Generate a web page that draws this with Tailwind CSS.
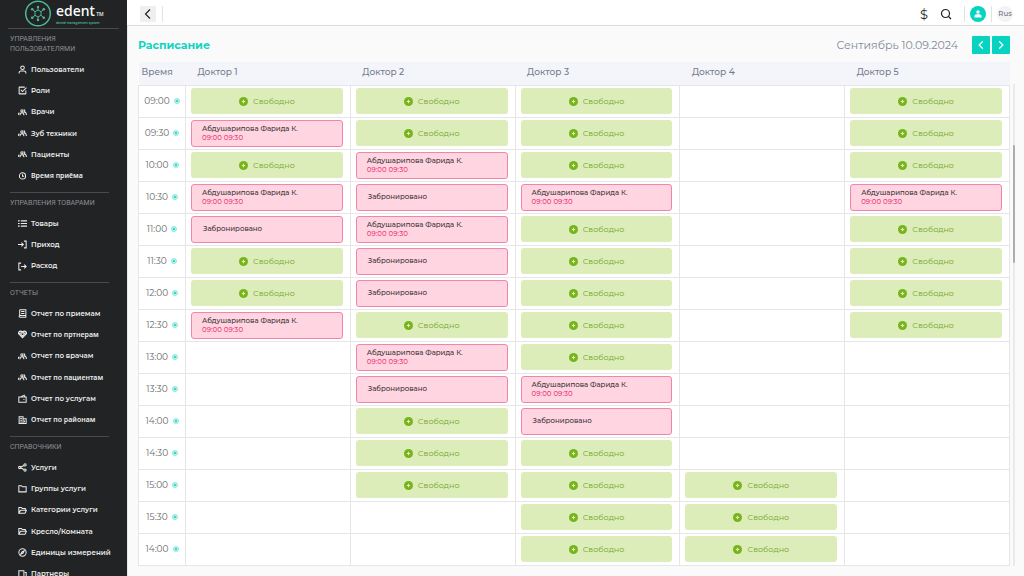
<!DOCTYPE html>
<html lang="ru">
  <head>
    <meta charset="UTF-8" />
    <meta name="viewport" content="width=device-width, initial-scale=1.0" />
    <title>edent - Расписание</title>
    <script src="https://cdn.jsdelivr.net/npm/@tailwindcss/browser@4"></script>
  </head>
  <body class="flex h-screen overflow-hidden bg-[#fafafa] font-['Montserrat','Inter',sans-serif]">
    <!-- Icons -->
    <svg class="hidden">
      <symbol id="user" viewBox="0 0 16 16"><circle cx="8" cy="5" r="3.2" /><path d="M2 15v-1.500c0-2 1.500-3 3.500-3h5c2 0 3.500 1 3.500 3V15" /></symbol>
      <symbol id="check" viewBox="0 0 16 16"><path d="M14 8v5.200a.8.8 0 0 1-.8.8H2.800a.8.8 0 0 1-.8-.8V2.800a.8.8 0 0 1 .8-.8H12M5 7l3 3 7-7" /></symbol>
      <symbol id="team" viewBox="0 0 16 16"><circle cx="7" cy="5" r="2" /><path d="M3.500 13c0-3 1-4.500 3.500-4.500s3.500 1.500 3.500 4.500M10 3.200a2 2 0 0 1 1 3.800c2.500.3 4 2.200 4 5.500M.5 12.500c0-2 .6-3.500 2-4" /></symbol>
      <symbol id="clock" viewBox="0 0 16 16"><circle cx="8" cy="7" r="5.500" /><path d="M8 4v3.500h3" /></symbol>
      <symbol id="list" viewBox="0 0 16 16"><path d="M0 3.500h3M0 8h3M0 12.500h3M5 3.500h11M5 8h11M5 12.500h11" stroke-width="2.200" /></symbol>
      <symbol id="login" viewBox="0 0 16 16"><path d="M0 8h9M6 4.500L9.500 8 6 11.500M10.500 2H14.500v12H10.500" /></symbol>
      <symbol id="logout" viewBox="0 0 16 16"><path d="M5.500 2H1.500v12h4M5.500 8h9M11 4.500L14.500 8 11 11.500" /></symbol>
      <symbol id="report" viewBox="0 0 16 16"><path d="M3 1.500h11v13H3.500a1.500 1.500 0 0 1 0-3H14M3 1.500v11M5.500 4.500h6M5.500 8h6" /></symbol>
      <symbol id="partner" viewBox="0 0 16 16"><path d="M4.500 2C6 2 7 2.500 8 3.500 9 2.500 10 2 11.500 2 14 2 15.500 4 15 6.500L8 14 1 6.500C.5 4 2 2 4.500 2zM2 6.500l3-.5 3-2.500 3 2.500 3 .5M5 7l3 4 3-4" fill="currentColor" fill-opacity=".4" /></symbol>
      <symbol id="bag" viewBox="0 0 16 16"><path d="M1.500 5.500h13v9h-13zM4 5.500l7-3.500 1.500 3.500M10.500 9v1.500" /></symbol>
      <symbol id="building" viewBox="0 0 16 16"><path d="M2 13.500v-12h7v12M9 5h5.500v8.500H1M4 4.500h3M4 7.500h3M4 10.500h3M11.500 8v3" /></symbol>
      <symbol id="share" viewBox="0 0 16 16"><circle cx="3" cy="8" r="2" /><circle cx="12.500" cy="3.500" r="2" /><circle cx="12.500" cy="12.500" r="2" /><path d="M5 7.200l5.500-2.700M5 8.800l5.500 2.700" /></symbol>
      <symbol id="folder" viewBox="0 0 16 16"><path d="M1.500 3h4.500l2 2h6.500v9h-13z" /></symbol>
      <symbol id="folder-open" viewBox="0 0 16 16"><path d="M1.500 13V2.500H6l1.500 2H13V7M1.500 13L4.500 7.500H15l-2.500 5.500z" /></symbol>
      <symbol id="compass" viewBox="0 0 16 16"><circle cx="8" cy="8" r="6.500" /><path d="M11 5L9 9l-4 2 2-4z" /></symbol>
      <symbol id="copy" viewBox="0 0 16 16"><path d="M1.500 1.500h9v10h-9zM12 4.500h2.500v10H6v-2" /></symbol>
      <symbol id="plus" viewBox="0 0 16 16"><circle cx="8" cy="8" r="8" fill="#76b41c" stroke="none" /><path d="M8 5v6M5 8h6" stroke="#dcedba" stroke-width="2" /></symbol>
    </svg>

    <!-- Sidebar -->
    <aside class="w-[127px] shrink-0 overflow-hidden bg-[#212325] text-[#ececec]">
      <a href="#" class="flex h-7 items-center gap-1 pl-6">
        <svg class="size-7 text-[#4db893]" viewBox="0 0 28 28" fill="none" stroke="currentColor">
          <circle cx="14" cy="13.500" r="12.300" stroke-width="1.500" />
          <path d="M14 10l3 1.700v3.600L14 17l-3-1.700v-3.600zM11 11.700L8.500 9.500M17 11.700l2.500-2.200M11 15.300l-2.500 2.200M17 15.300l2.500 2.200M14 10V7.500M14 17v2.500" />
          <g fill="currentColor" stroke="none">
            <circle cx="8.200" cy="9.200" r="1.300" /><circle cx="19.800" cy="9.200" r="1.300" /><circle cx="8.200" cy="17.800" r="1.300" /><circle cx="19.800" cy="17.800" r="1.300" />
            <circle cx="14" cy="7" r="1.200" /><circle cx="14" cy="20" r="1.200" />
          </g>
        </svg>
        <span class="flex flex-col font-['Noto_Sans',sans-serif]">
          <span class="text-[14px] leading-[14px] font-medium text-white">edent<span class="text-[5px]"> TM</span></span>
          <span class="font-['Montserrat','Inter',sans-serif] text-[3px] leading-[4px] font-semibold whitespace-nowrap text-[#4db893]">dental management system</span>
        </span>
      </a>
      <nav id="menu"></nav>
    </aside>

    <!-- Page -->
    <div class="flex min-w-0 flex-1 flex-col">
      <header class="flex h-[26px] shrink-0 items-center justify-between border-b border-[#dcdcdc] bg-white pt-0.5 pr-[11px] pl-[13px]">
        <div class="flex items-center">
          <button aria-label="Назад" class="flex size-4 items-center justify-center bg-[#efefef]">
            <svg class="size-3 fill-none stroke-[#222] stroke-[1.200]" viewBox="0 0 12 12"><path d="M8 1.500L3.500 6 8 10.500" /></svg>
          </button>
          <span class="ml-1.5 h-4 w-px bg-[#e2e2e2]"></span>
        </div>
        <div class="flex items-center">
          <button aria-label="Валюта" class="text-[13px] leading-4 text-[#222]">$</button>
          <button aria-label="Поиск" class="ml-3">
            <svg class="size-3 fill-none stroke-[#222] stroke-[1.200]" viewBox="0 0 12 12"><circle cx="5.500" cy="5.500" r="4" /><path d="M8.500 8.500L11 11" /></svg>
          </button>
          <span class="ml-3 h-4 w-px bg-[#e2e2e2]"></span>
          <button aria-label="Профиль" class="ml-[5px] flex size-4 items-center justify-center rounded-full bg-[#06d3c0]">
            <svg class="size-2 fill-white" viewBox="0 0 8 8"><circle cx="4" cy="2" r="1.700" /><path d="M.5 7.500V6.300C.5 5 1.500 4.300 2.700 4.300h2.600c1.200 0 2.200.7 2.200 2v1.200z" /></svg>
          </button>
          <span class="ml-[5px] h-4 w-px bg-[#e2e2e2]"></span>
          <button class="ml-[5px] flex size-4 items-center justify-center rounded-full bg-[#f3f3f3] text-[7px] leading-4 font-medium text-[#6f7787]">Rus</button>
        </div>
      </header>

      <main class="flex-1 border-l border-[#e8e8e8] pl-2.5">
        <div class="flex h-9 items-center justify-between pt-0.5 pr-3.5">
          <h1 class="text-[11px] leading-4 font-bold text-[#10d3c1]">Расписание</h1>
          <div class="flex items-center gap-0.5">
            <time class="mr-3 text-[11px] leading-4 text-[#838a98]">Сентиябрь 10.09.2024</time>
            <button aria-label="Предыдущий день" class="flex size-[18px] items-center justify-center rounded-[1px] bg-[#06d3c0]">
              <svg class="size-2.5 fill-none stroke-white stroke-1" viewBox="0 0 8 8"><path d="M5.500 1L2.500 4l3 3" /></svg>
            </button>
            <button aria-label="Следующий день" class="flex size-[18px] items-center justify-center rounded-[1px] bg-[#06d3c0]">
              <svg class="size-2.5 fill-none stroke-white stroke-1" viewBox="0 0 8 8"><path d="M2.500 1l3 3-3 3" /></svg>
            </button>
          </div>
        </div>

        <div class="flex gap-[3px] pr-[9px]">
          <div class="min-w-0 flex-1">
            <table class="w-full table-fixed border-collapse bg-white">
              <thead>
                <tr class="h-[23px] bg-[#f4f5fa] text-left text-[9px] leading-3 text-[#747b8a]">
                  <th class="w-[47px] p-0 pb-0.5 pl-[3px] font-medium">Время</th>
                  <th class="p-0 pb-0.5 pl-3 font-medium">Доктор 1</th>
                  <th class="p-0 pb-0.5 pl-3 font-medium">Доктор 2</th>
                  <th class="p-0 pb-0.5 pl-3 font-medium">Доктор 3</th>
                  <th class="p-0 pb-0.5 pl-3 font-medium">Доктор 4</th>
                  <th class="p-0 pb-0.5 pl-3 font-medium">Доктор 5</th>
                </tr>
              </thead>
              <tbody id="schedule"></tbody>
            </table>
          </div>
          <div class="mt-[22px] w-0.5 bg-[#eaeaea] pt-[61px]">
            <div class="h-[118px] rounded-full bg-[#adadad]"></div>
          </div>
        </div>
      </main>
    </div>

    <script>
      // [icon, label, small]
      const menu = [
        { title: 'Управления пользователями', items: [['user', 'Пользователи'], ['check', 'Роли'], ['team', 'Врачи'], ['team', 'Зуб техники'], ['team', 'Пациенты'], ['clock', 'Время приёма', true]] },
        { title: 'Управления товарами', items: [['list', 'Товары'], ['login', 'Приход'], ['logout', 'Расход']] },
        { title: 'Отчеты', items: [['report', 'Отчет по приемам'], ['partner', 'Отчет по пртнерам', true], ['team', 'Отчет по врачам'], ['team', 'Отчет по пациентам', true], ['bag', 'Отчет по услугам'], ['building', 'Отчет по районам', true]] },
        { title: 'Справочники', items: [['share', 'Услуги'], ['folder', 'Группы услуги'], ['folder-open', 'Категории услуги'], ['folder-open', 'Кресло/Комната'], ['compass', 'Единицы измерений'], ['copy', 'Партнеры']] },
      ];

      document.getElementById('menu').innerHTML = menu
        .map(
          (group, i) => `
          <section class="${i === 0 ? 'mx-2' : 'ml-2.5 mr-[18px]'} border-t border-[#484a4d] pt-[5px] pb-[5px]">
            <h2 class="${i === 0 ? 'ml-0.5 w-20' : 'whitespace-nowrap'} font-['Roboto',sans-serif] text-[7px] leading-[10px] text-[#8c8f94] uppercase">${group.title}</h2>
            <ul class="${group.items.length === 3 ? 'h-16' : 'h-32'} ${i === 0 ? 'ml-0.5' : ''} mt-[5px] flex flex-col">
              ${group.items
                .map(
                  ([icon, label, small]) => `
                <li class="flex flex-1 items-center">
                  <a href="#" class="${small ? "font-['Noto_Sans',sans-serif]" : ''} flex items-center gap-1 pl-2 text-[7px] leading-[10px] font-semibold whitespace-nowrap">
                    <svg class="size-[9px] shrink-0 fill-none stroke-current stroke-[1.800]"><use href="#${icon}" /></svg>${label}
                  </a>
                </li>`
                )
                .join('')}
            </ul>
          </section>`
        )
        .join('');

      // f - free, p - patient, b - booked, - - empty
      const rows = [
        ['09:00', 'fff-f'],
        ['09:30', 'pff-f'],
        ['10:00', 'fpf-f'],
        ['10:30', 'pbp-p'],
        ['11:00', 'bpf-f'],
        ['11:30', 'fbf-f'],
        ['12:00', 'fbf-f'],
        ['12:30', 'pff-f'],
        ['13:00', '-pf--'],
        ['13:30', '-bp--'],
        ['14:00', '-fb--'],
        ['14:30', '-ff--'],
        ['15:00', '-fff-'],
        ['15:30', '--ff-'],
        ['14:00', '--ff-'],
      ];

      const slots = {
        f: `<button class="flex h-[26px] w-full items-center justify-center gap-[5px] rounded-[3px] bg-[#dcedba] text-[8px] text-[#76a62c]"><svg class="size-[9px]"><use href="#plus" /></svg>Свободно</button>`,
        p: `<button class="flex h-[27px] w-full flex-col justify-center rounded-[3px] border border-[#f285a9] bg-[#ffd5e2] pl-2.5 text-left text-[7px] leading-[9px] font-medium text-[#3c3238]"><span>Абдушарипова Фарида К.</span><span class="text-[#f0427c]">09:00 09:30</span></button>`,
        b: `<button class="flex h-[27px] w-full items-center rounded-[3px] border border-[#f285a9] bg-[#ffd5e2] pl-[11px] text-[7px] font-medium text-[#3c3238]">Забронировано</button>`,
        '-': '',
      };

      document.getElementById('schedule').innerHTML = rows
        .map(
          ([time, cells]) => `
          <tr class="h-8">
            <td class="border border-[#e6e6e6] p-0">
              <div class="flex items-center justify-center gap-1 text-[9px] text-[#6b6b6b]">${time}
                <svg class="size-[6px]" viewBox="0 0 6 6"><circle cx="3" cy="3" r="2.500" fill="#c4f5ef" stroke="#6fe5d9" stroke-width=".8" /><circle cx="3" cy="3" r="1.100" fill="#10cfbd" /></svg>
              </div>
            </td>
            ${[...cells].map((c) => `<td class="border border-[#e6e6e6] pr-[7px] pl-[5px] py-0">${slots[c]}</td>`).join('')}
          </tr>`
        )
        .join('');
    </script>
  </body>
</html>
